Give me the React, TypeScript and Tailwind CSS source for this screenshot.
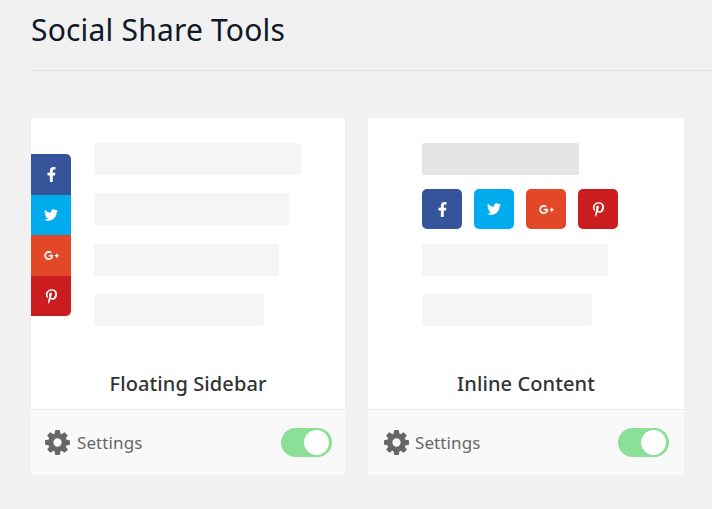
import { FaFacebookF, FaTwitter, FaGooglePlusG, FaPinterestP } from "react-icons/fa";

const font = { fontFamily: '"Noto Sans", "Open Sans", sans-serif' };

function Gear() {
  return (
    <svg viewBox="0 0 1792 1792" className="h-[29px] w-[29px] shrink-0" fill="#666666">
      <path d="M1152 896q0-106-75-181t-181-75-181 75-75 181 75 181 181 75 181-75 75-181zm512-109v222q0 12-8 23t-20 13l-185 28q-19 54-39 91 35 50 107 138 10 12 10 25t-9 23q-27 37-99 108t-94 71q-12 0-26-9l-138-108q-44 23-91 38-16 136-29 186-7 28-36 28h-222q-14 0-24.500-8.500t-11.500-21.500l-28-184q-49-16-90-37l-141 107q-10 9-25 9-14 0-25-11-126-114-165-168-7-10-7-23 0-12 8-23 15-21 51-66.500t54-70.500q-27-50-41-99l-183-27q-13-2-21-12.500t-8-23.500v-222q0-12 8-23t19-13l186-28q14-46 39-92-40-57-107-138-10-12-10-24 0-10 9-23 26-36 98.500-107.500t94.500-71.500q13 0 26 10l138 107q44-23 91-38 16-136 29-186 7-28 36-28h222q14 0 24.500 8.500t11.500 21.500l28 184q49 16 90 37l142-107q9-9 24-9 13 0 25 10 129 119 165 170 7 8 7 22 0 12-8 23-15 21-51 66.500t-54 70.500q26 50 41 98l183 28q13 2 21 12.500t8 23.500z" />
    </svg>
  );
}

function Footer({ pl, pr, gap }: { pl: string; pr: string; gap: string }) {
  return (
    <div className={`flex h-[66px] items-center justify-between border-t border-[#e8e8e8] bg-[#f9f9f9] ${pl} ${pr}`}>
      <div className={`flex items-center text-[#666666] ${gap}`}>
        <Gear />
        <span className="text-[17px] leading-6 tracking-[0.1px]">Settings</span>
      </div>
      <div className="flex h-[29px] w-[51px] items-center justify-end rounded-full bg-[#8cdf97] pr-[3px]">
        <div className="h-[25px] w-[25px] rounded-full bg-white" />
      </div>
    </div>
  );
}

function Bar({ w, mt }: { w: string; mt: string }) {
  return <div className={`h-[32px] rounded-[2px] bg-[#f5f5f5] ${w} ${mt}`} />;
}

export default function App() {
  return (
    <div style={font} className="h-[509px] w-[712px] overflow-hidden bg-[#f1f1f1] pl-[31px]">
      <div className="h-[71px] border-b border-[#dedede] pt-[8px]">
        <h1 className="text-[30px] leading-[44px] tracking-[0.2px] text-[#111827]">Social Share Tools</h1>
      </div>
      <div className="mt-[47px] flex gap-[23px]">
        <div className="w-[314px] bg-white">
          <div className="relative h-[291px] pl-[63px] pt-[25px]">
            <div className="absolute left-0 top-[36px] flex w-[40px] flex-col overflow-hidden rounded-r-[5px] text-white">
              <div className="flex h-[41px] items-center justify-center bg-[#35549c] text-[15px]"><FaFacebookF /></div>
              <div className="flex h-[40px] items-center justify-center bg-[#00aced] text-[14px]"><FaTwitter /></div>
              <div className="flex h-[41px] items-center justify-center bg-[#e24827] text-[15px]"><FaGooglePlusG /></div>
              <div className="flex h-[40px] items-center justify-center bg-[#cb1d1f] text-[15px]"><FaPinterestP /></div>
            </div>
            <Bar w="w-[207px]" mt="mt-0" />
            <Bar w="w-[195px]" mt="mt-[18px]" />
            <Bar w="w-[185px]" mt="mt-[19px]" />
            <Bar w="w-[170px]" mt="mt-[18px]" />
            <div className="absolute inset-x-0 bottom-[11px] text-center text-[20px] font-medium leading-7 tracking-[0.1px] text-[#333333]">Floating Sidebar</div>
          </div>
          <Footer pl="pl-[12px]" pr="pr-[13px]" gap="gap-[5px]" />
        </div>
        <div className="w-[316px] bg-white">
          <div className="relative h-[291px] pl-[54px] pt-[25px]">
            <div className="h-[32px] w-[157px] rounded-[2px] bg-[#e5e5e5]" />
            <div className="mt-[14px] flex gap-[12px] text-white">
              <div className="flex h-[40px] w-[40px] items-center justify-center rounded-[5px] bg-[#35549c] text-[15px]"><FaFacebookF /></div>
              <div className="flex h-[40px] w-[40px] items-center justify-center rounded-[5px] bg-[#00aced] text-[14px]"><FaTwitter /></div>
              <div className="flex h-[40px] w-[40px] items-center justify-center rounded-[5px] bg-[#e24827] text-[15px]"><FaGooglePlusG /></div>
              <div className="flex h-[40px] w-[40px] items-center justify-center rounded-[5px] bg-[#cb1d1f] text-[15px]"><FaPinterestP /></div>
            </div>
            <Bar w="w-[186px]" mt="mt-[15px]" />
            <Bar w="w-[170px]" mt="mt-[18px]" />
            <div className="absolute inset-x-0 bottom-[11px] text-center text-[20px] font-medium leading-7 tracking-[0.1px] text-[#333333]">Inline Content</div>
          </div>
          <Footer pl="pl-[14px]" pr="pr-[15px]" gap="gap-[4px]" />
        </div>
      </div>
    </div>
  );
}
